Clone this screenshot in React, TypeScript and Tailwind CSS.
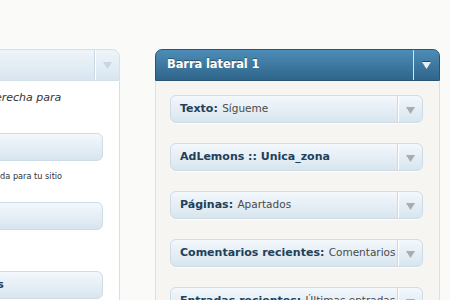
import React from "react";

const font = { fontFamily: '"DejaVu Sans", Verdana, sans-serif' };

function Arrow({ color, className = "" }: { color: string; className?: string }) {
  return (
    <svg width="9" height="7" viewBox="0 0 9 7" className={className}>
      <polygon points="0,0 9,0 4.5,7" fill={color} />
    </svg>
  );
}

function Widget({ title, sub, wide = true }: { title: string; sub?: string; wide?: boolean }) {
  return (
    <div className="flex h-[28px] shrink-0 rounded-[6px] border border-[#cddde8] bg-gradient-to-b from-[#f3f8fc] to-[#d8e5ee] shadow-[0_1px_0_rgba(255,255,255,0.8)]">
      <div className="flex-1 min-w-0 overflow-hidden whitespace-nowrap flex items-center pl-[9px]">
        <span className="font-bold text-[11px] text-[#21405a]">{title}</span>
        {sub && <span className="text-[10.5px] text-[#4a4a4a] ml-[1px]">&nbsp;{sub}</span>}
      </div>
      {wide && (
        <div className="w-[25px] shrink-0 border-l border-[#c9dae6] shadow-[inset_1px_0_0_#ffffff] flex items-center justify-center pt-[2px]">
          <Arrow color="#a9adb1" />
        </div>
      )}
    </div>
  );
}

export default function App() {
  return (
    <div className="w-[450px] h-[300px] bg-[#fafaf8] overflow-hidden" style={font}>
      <div className="flex items-start pt-[49px] gap-[35px]">
        {/* Left panel (mostly off-screen) */}
        <div className="ml-[-90px] w-[210px] shrink-0 h-[260px] flex flex-col">
          <div className="h-[32px] shrink-0 flex rounded-tr-[8px] border border-[#d3e1eb] bg-gradient-to-b from-[#eef5fa] to-[#d9e6ef]">
            <div className="flex-1" />
            <div className="w-[25px] border-l border-[#c9dae6] shadow-[inset_1px_0_0_#ffffff] flex items-center justify-center pt-[1px]">
              <Arrow color="#c5d7e4" />
            </div>
          </div>
          <div className="flex-1 bg-white border-x border-[#d3e1eb] flex flex-col">
            <div className="pt-[9px] h-[52px] shrink-0 overflow-hidden whitespace-nowrap pl-[77px] italic text-[11px] text-[#333]">
              derecha para
            </div>
            <div className="pl-[16px] pr-[16px]">
              <Widget title="Búsqueda" wide={false} />
            </div>
            <div className="pl-[59px] pt-[9px] h-[41px] shrink-0 whitespace-nowrap overflow-hidden text-[8.2px] text-[#333]">
              búsqueda para tu sitio
            </div>
            <div className="pl-[16px] pr-[16px]">
              <Widget title="Archivos" wide={false} />
            </div>
            <div className="h-[41px] shrink-0" />
            <div className="pl-[16px] pr-[16px]">
              <Widget title="Categorías" wide={false} />
            </div>
          </div>
        </div>

        {/* Right panel */}
        <div className="w-[285px] shrink-0 h-[260px] flex flex-col">
          <div className="h-[32px] shrink-0 flex rounded-t-[7px] border border-[#2a5572] bg-gradient-to-b from-[#4d8db8] to-[#2f658a]">
            <div className="flex-1 flex items-center pl-[11px] text-white font-bold text-[11.5px] tracking-[-0.1px] [text-shadow:0_-1px_0_rgba(0,0,0,0.35)]">
              Barra lateral 1
            </div>
            <div className="w-[26px] border-l border-[#d6e4ee] flex items-center justify-center pt-[1px]">
              <Arrow color="#e6edf2" className="drop-shadow-[0_-1px_0_rgba(0,0,0,0.4)]" />
            </div>
          </div>
          <div className="flex-1 bg-[#f6f5f1] border-x border-[#d3e3ee] pl-[14px] pr-[16px] pt-[14px] flex flex-col gap-[20px]">
            <Widget title="Texto:" sub="Sígueme" />
            <Widget title="AdLemons :: Unica_zona" />
            <Widget title="Páginas:" sub="Apartados" />
            <Widget title="Comentarios recientes:" sub="Comentarios" />
            <Widget title="Entradas recientes:" sub="Últimas entradas" />
          </div>
        </div>
      </div>
    </div>
  );
}
